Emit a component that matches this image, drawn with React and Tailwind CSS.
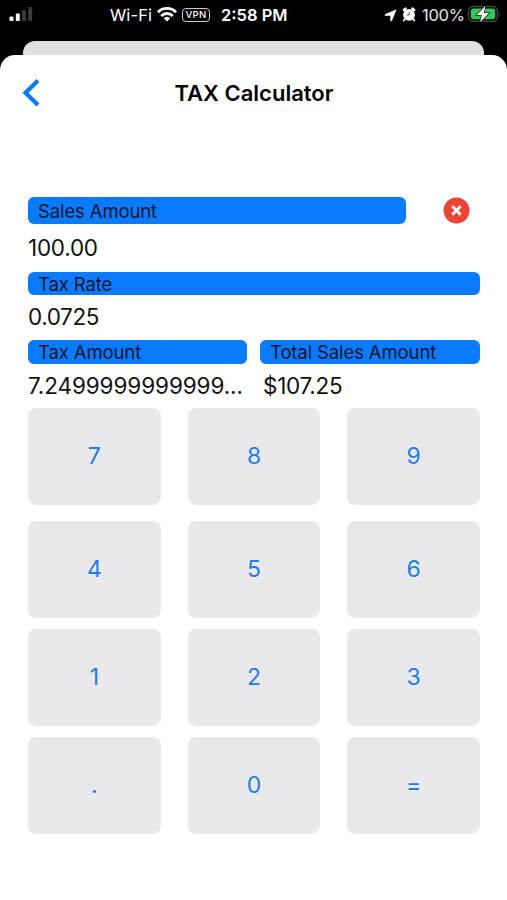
import { useState } from 'react'
import clsx from 'clsx'

const KEY_ROWS = [
  ['7', '8', '9'],
  ['4', '5', '6'],
  ['1', '2', '3'],
  ['.', '0', '='],
]

function SignalIcon() {
  return (
    <svg width="24" height="16" viewBox="0 0 24 16">
      <rect x="0.5" y="9.5" width="4" height="4.5" rx="1" fill="#fff" />
      <rect x="6.8" y="6.5" width="4" height="7.5" rx="1" fill="#fff" />
      <rect x="13" y="3.2" width="4" height="10.8" rx="1" fill="#3b3b3d" />
      <rect x="19.2" y="0" width="4" height="14" rx="1" fill="#3b3b3d" />
    </svg>
  )
}

function WifiIcon() {
  return (
    <svg width="20" height="16" viewBox="0 0 20 16" fill="none" stroke="#fff" strokeWidth="2.9">
      <path d="M1 6.2a12.6 12.6 0 0 1 18 0" />
      <path d="M4.2 9.9a8.2 8.2 0 0 1 11.6 0" />
      <path d="M10 15.6l-3.3-3.4a4.8 4.8 0 0 1 6.6 0z" fill="#fff" stroke="none" />
    </svg>
  )
}

function LocationIcon() {
  return (
    <svg width="13" height="13" viewBox="0 0 13 13">
      <path d="M12.2.8L7.6 11.8c-.3.6-1 .5-1-.2V6.4H1.400C.7 6.4.6 5.7 1.2 5.4z" fill="#fff" stroke="#fff" strokeWidth="0.6" strokeLinejoin="round" />
    </svg>
  )
}

function AlarmIcon() {
  return (
    <svg width="14" height="15" viewBox="0 0 14 15">
      <circle cx="7" cy="7.8" r="5.9" fill="#fff" />
      <path d="M2 3L3.500 1.700M12 3L10.500 1.700" stroke="#fff" strokeWidth="2.6" strokeLinecap="round" />
      <path d="M2.7 12.3L1.7 13.500M11.3 12.3L12.3 13.500" stroke="#fff" strokeWidth="1.8" strokeLinecap="round" />
      <path d="M7.3 4.8V8H4.6" fill="none" stroke="#555" strokeWidth="1" />
    </svg>
  )
}

function BatteryIcon() {
  return (
    <svg width="33" height="18" viewBox="0 0 33 18">
      <rect x="0.7" y="1.5" width="28.6" height="14.8" rx="4.5" fill="#000" stroke="#454547" strokeWidth="1.4" />
      <rect x="2.8" y="3.6" width="24.4" height="10.6" rx="2.7" fill="#35c759" />
      <path d="M30.8 6.7c1.5.7 1.5 3.8 0 4.5z" fill="#454547" />
      <path d="M17.5.8L8.4 10h5.4l-1.8 7.2L21.2 8h-5.4z" fill="#fff" stroke="#000" strokeWidth="1.2" paintOrder="stroke" />
    </svg>
  )
}

function StatusBar() {
  return (
    <div className="flex h-[41px] items-start pl-[9px] pr-[6px] pt-[3px] text-[16.5px] leading-6 text-white">
      <div className="pt-1">
        <SignalIcon />
      </div>
      <span className="ml-[77px] w-[40px] whitespace-nowrap tracking-[0.1px]">Wi-Fi</span>
      <div className="ml-[7px] pt-[3px]">
        <WifiIcon />
      </div>
      <span className="ml-[5px] mt-[5px] flex h-[14px] w-7 items-center justify-center rounded-[4px] border-[1.5px] border-white/80 text-[9.5px] font-medium leading-none tracking-[0.4px]">
        VPN
      </span>
      <span className="ml-[11px] whitespace-nowrap font-semibold">2:58 PM</span>
      <div className="ml-auto flex">
        <div className="pt-[6px]">
          <LocationIcon />
        </div>
        <div className="ml-[5px] pt-1">
          <AlarmIcon />
        </div>
        <span className="ml-[6px] w-[44px] whitespace-nowrap tracking-[-0.3px] text-white/90">100%</span>
        <div className="ml-[2px] pt-[2px]">
          <BatteryIcon />
        </div>
      </div>
    </div>
  )
}

function Header() {
  return (
    <header className="grid h-[75px] grid-cols-[1fr_auto_1fr] items-center px-[22px]">
      <button type="button" aria-label="Back">
        <svg width="18" height="28" viewBox="0 0 18 28" fill="none" stroke="#0b79fe" strokeWidth="4.2">
          <path d="M16 1.5L3.5 13.7L16 26" />
        </svg>
      </button>
      <h1 className="whitespace-nowrap pl-px pt-px text-[22px] font-semibold">TAX Calculator</h1>
    </header>
  )
}

function Label({ children, className }) {
  return (
    <div className={clsx('flex items-center rounded-[6px] bg-[#0a7aff] pl-[10px] text-[18.5px] leading-none tracking-[-0.12px] text-[#04142e]', className)}>
      {children}
    </div>
  )
}

function Value({ children, className }) {
  return (
    <div className={clsx('flex items-center whitespace-nowrap text-[22.5px] leading-none text-[#111]', className)}>
      {children}
    </div>
  )
}

function Key({ label, onPress }) {
  return (
    <button
      type="button"
      onClick={() => onPress(label)}
      className="flex items-center justify-center rounded-[8px] bg-[#e9e9eb] text-[23px] leading-none text-[#1f7ce8]"
    >
      {label}
    </button>
  )
}

// long results are cut to fit half a row
function shorten(text) {
  return text.length > 15 ? `${text.slice(0, 15)}...` : text
}

export default function App() {
  const [amount, setAmount] = useState('100.00')
  const rate = 0.0725
  const tax = Number(amount) * rate

  function handleKey(key) {
    if (key === '=') return
    setAmount(prev => prev + key)
  }

  return (
    <div className="flex h-[900px] w-[507px] flex-col overflow-hidden bg-black font-['Inter','Liberation_Sans',sans-serif]">
      <StatusBar />
      <div className="mx-[23px] h-[14px] shrink-0 rounded-t-[12px] bg-[#e0e0e0]" />

      <main className="flex-1 rounded-t-[15px] bg-white">
        <Header />

        <div className="pl-[28px] pr-[27px] pt-[67px]">
          <div className="flex items-center">
            <Label className="h-[27px] w-[378px] pt-px">Sales Amount</Label>
            <button type="button" aria-label="Clear" onClick={() => setAmount('')} className="ml-[37px]">
              <svg width="27" height="27" viewBox="0 0 27 27">
                <circle cx="13.5" cy="13.5" r="13" fill="#ef4335" />
                <path d="M9.3 9.3l8.400 8.400M17.7 9.3l-8.400 8.400" stroke="#fff" strokeWidth="2.9" />
              </svg>
            </button>
          </div>
          <Value className="h-[48px] tracking-[-0.25px]">{amount}</Value>

          <Label className="h-[23px] pt-px">Tax Rate</Label>
          <Value className="h-[45px] tracking-[-0.4px]">{rate}</Value>

          <div className="grid grid-cols-[219px_220px] gap-x-[13px]">
            <Label className="h-[24px]">Tax Amount</Label>
            <Label className="h-[24px]">Total Sales Amount</Label>
            <Value className="h-[44px] tracking-[-0.1px]">{shorten(tax.toFixed(17))}</Value>
            <Value className="h-[44px] pl-[3px] tracking-[-0.25px]">${(Number(amount) + tax).toFixed(2)}</Value>
          </div>

          {/* Keypad */}
          <div className="flex flex-col gap-[11.5px]">
            {KEY_ROWS.map((row, i) => (
              <div key={row[0]} className={clsx('grid h-[96.5px] grid-cols-3 gap-x-[27px]', i === 0 && 'mb-[5px]')}>
                {row.map(k => (
                  <Key key={k} label={k} onPress={handleKey} />
                ))}
              </div>
            ))}
          </div>
        </div>
      </main>
    </div>
  )
}
